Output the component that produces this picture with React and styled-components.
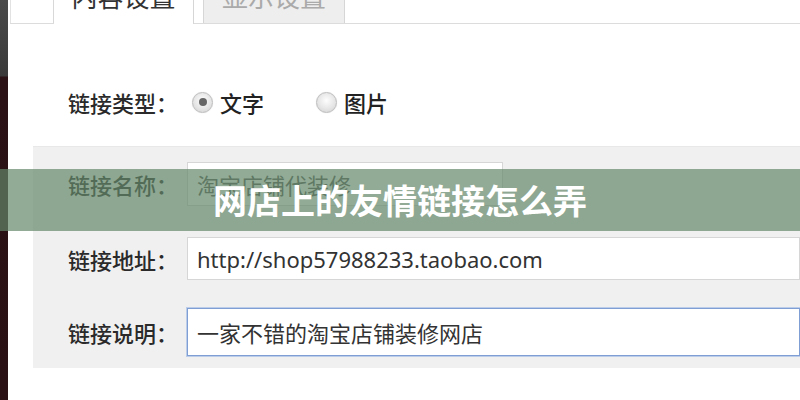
import React from "react";
import styled, { createGlobalStyle } from "styled-components";

const GlobalStyle = createGlobalStyle`
	html, body {
		margin: 0;
		padding: 0;
		background: #fff;
	}
	body {
		font-family: "Noto Sans", "Noto Sans CJK SC", sans-serif;
	}
`;

const fields = [
	{ label: "链接名称：", value: "淘宝店铺代装修", width: "316px", top: 0, height: 44 },
	{ label: "链接地址：", value: "http://shop57988233.taobao.com", top: 31, height: 43 },
	{ label: "链接说明：", value: "一家不错的淘宝店铺装修网店", top: 28, height: 48, focused: true },
];

const App = () => {
	const [linkType, setLinkType] = React.useState("text");

	return (
		<Page>
			<GlobalStyle />
			<SideStrip />
			<Main>
				<TabBar>
					<StubTab />
					<Tab className="active">内容设置</Tab>
					<Tab>显示设置</Tab>
				</TabBar>
				<Content>
					<TypeRow>
						<Label>链接类型：</Label>
						<RadioGroup>
							<RadioOption onClick={() => setLinkType("text")}>
								<Radio checked={linkType === "text"} />
								文字
							</RadioOption>
							<RadioOption onClick={() => setLinkType("image")}>
								<Radio checked={linkType === "image"} />
								图片
							</RadioOption>
						</RadioGroup>
					</TypeRow>
					<Panel>
						{fields.map((f) => (
							<FieldRow key={f.label} $top={f.top}>
								<Label>{f.label}</Label>
								<Input
									readOnly
									defaultValue={f.value}
									$width={f.width}
									$height={f.height}
									$focused={f.focused}
								/>
							</FieldRow>
						))}
					</Panel>
				</Content>
			</Main>
			<Banner>网店上的友情链接怎么弄</Banner>
		</Page>
	);
};

const Page = styled.div`
	position: relative;
	display: flex;
	width: 800px;
	height: 400px;
	overflow: hidden;
	background: #fff;
`;

const SideStrip = styled.div`
	flex: 0 0 8px;
	background: linear-gradient(
		to bottom,
		#4a4a4a 0,
		#3a3a3a 76px,
		#2b1216 77px,
		#2a1114 100%
	);
`;

const Main = styled.div`
	flex: 1;
	display: flex;
	flex-direction: column;
	min-width: 0;
`;

const TabBar = styled.div`
	display: flex;
	align-items: stretch;
	height: 23px;
	margin-left: 2px;
	border-bottom: 1px solid #dcdcdc;
`;

const StubTab = styled.div`
	width: 42px;
	border-left: 1px solid #e2e2e2;
	border-right: 1px solid #d8d8d8;
`;

const Tab = styled.div`
	display: flex;
	align-items: flex-end;
	justify-content: center;
	width: 142px;
	margin-left: 9px;
	padding-bottom: 14px;
	box-sizing: border-box;
	overflow: hidden;
	font-family: "Noto Sans CJK SC", sans-serif;
	font-size: 26px;
	line-height: 26px;
	color: #aaa;
	background: #eeeeee;
	border-left: 1px solid #d6d6d6;
	border-right: 1px solid #d6d6d6;

	&.active {
		width: 140px;
		margin-left: 0;
		margin-bottom: -1px;
		padding-bottom: 15px;
		color: #333;
		background: #fff;
		border-left: none;
	}
`;

const Content = styled.div`
	display: flex;
	flex-direction: column;
	padding-left: 25px;
`;

const TypeRow = styled.div`
	display: flex;
	align-items: center;
	height: 40px;
	margin-top: 58px;
	padding-left: 35px;
`;

const Label = styled.div`
	flex: 0 0 119px;
	font-family: "Noto Sans CJK SC", sans-serif;
	font-size: 22px;
	font-weight: 500;
	color: #2a2a2a;
	white-space: nowrap;
`;

const RadioGroup = styled.div`
	display: flex;
	align-items: center;
	gap: 52px;
	margin-left: 5px;
`;

const RadioOption = styled.label`
	display: flex;
	align-items: center;
	gap: 7px;
	font-family: "Noto Sans CJK SC", sans-serif;
	font-size: 22px;
	font-weight: 500;
	color: #222;
	cursor: pointer;
`;

const Radio = styled.span`
	position: relative;
	width: 19px;
	height: 19px;
	border-radius: 50%;
	border: 1px solid #bdbdbd;
	background: radial-gradient(circle at 50% 40%, #fdfdfd 0, #e6e6e6 55%, #cfcfcf 100%);
	box-shadow: 0 0 1px rgba(0, 0, 0, 0.15);

	&::after {
		content: "";
		position: absolute;
		left: 50%;
		top: 50%;
		width: 8px;
		height: 8px;
		margin: -4px 0 0 -4px;
		border-radius: 50%;
		background: #666;
		display: ${(p) => (p.checked ? "block" : "none")};
	}
`;

const Panel = styled.div`
	display: flex;
	flex-direction: column;
	margin-top: 24px;
	padding: 15px 0 12px 35px;
	background: #f0f0f0;
	border-top: 1px solid #e8e8e8;
`;

const FieldRow = styled.div`
	display: flex;
	align-items: center;
	margin-top: ${(p) => p.$top}px;
`;

const Input = styled.input`
	box-sizing: border-box;
	flex: ${(p) => (p.$width ? `0 0 ${p.$width}` : "1")};
	min-width: 0;
	height: ${(p) => p.$height}px;
	margin: 0;
	padding: 0 9px;
	font-family: "Noto Sans", "Noto Sans CJK SC", sans-serif;
	font-size: 22px;
	color: ${(p) => (p.$width ? "#555" : "#333")};
	background: #fff;
	border: 1px solid ${(p) => (p.$focused ? "#7f9fd4" : "#d6d6d6")};
	box-shadow: ${(p) => (p.$focused ? "0 0 0 1px #bccdea" : "none")};
	border-radius: 0;
	outline: none;
`;

const Banner = styled.div`
	position: absolute;
	top: 169px;
	left: 0;
	right: 0;
	height: 62px;
	line-height: 62px;
	text-align: center;
	font-family: "Noto Sans CJK SC", sans-serif;
	font-size: 34px;
	font-weight: 700;
	color: #fff;
	background: rgba(100, 135, 105, 0.7);
`;

export default App;
